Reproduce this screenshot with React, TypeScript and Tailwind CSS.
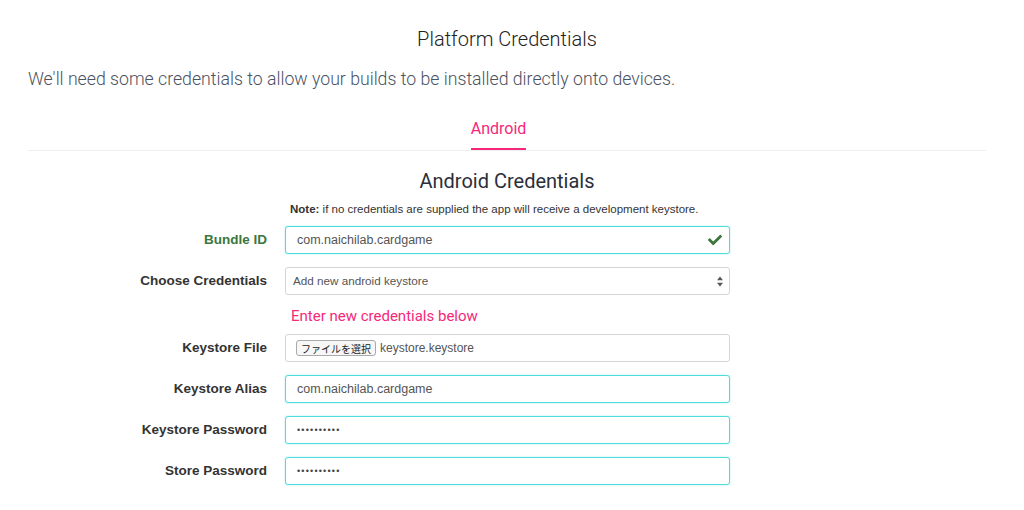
import { FaCheck } from "react-icons/fa";

const labelCls =
  "w-[285px] shrink-0 pr-[18px] text-right text-[13.5px] font-bold text-[#333] [font-family:'Liberation_Sans',Arial,sans-serif]";
const boxCls =
  "flex h-[28px] w-[445px] items-center rounded-[3px] border bg-white text-[12.5px] text-[#555] [font-family:'Liberation_Sans',Arial,sans-serif]";

function Row({ label, children, green }: { label: string; children: React.ReactNode; green?: boolean }) {
  return (
    <div className="flex items-center">
      <div className={labelCls + (green ? " !text-[#3c763d]" : "")}>{label}</div>
      {children}
    </div>
  );
}

function Dots() {
  return (
    <span className="pl-[11px] text-[9px] tracking-[1.2px] text-[#444]">••••••••••</span>
  );
}

export default function App() {
  return (
    <div className="min-h-[510px] w-full bg-white [font-family:Roboto,'Liberation_Sans',sans-serif]">
      <div className="ml-[28px] w-[958px] pt-[26px]">
        <h1 className="text-center text-[20px] font-light leading-[26px] text-[#222]">Platform Credentials</h1>
        <p className="mt-[14px] text-[17.7px] font-light leading-[26px] text-[#4b5262]">
          We'll need some credentials to allow your builds to be installed directly onto devices.
        </p>

        {/* tabs */}
        <div className="mt-[26px] flex justify-center border-b border-[#eeeeee]">
          <div className="mr-[17px] border-b-2 border-[#f5287a] pb-[8px] text-[16px] leading-[22px] text-[#f5287a]">Android</div>
        </div>

        <h2 className="mt-[17px] text-center text-[20px] font-normal leading-[26px] text-[#2b2f3a]">Android Credentials</h2>
        <p className="mt-[7px] pl-[262px] text-[11.5px] text-[#333] [font-family:'Liberation_Sans',Arial,sans-serif]">
          <b>Note:</b> if no credentials are supplied the app will receive a development keystore.
        </p>
      </div>

      <div className="mt-[8px] flex flex-col">
        <Row label="Bundle ID" green>
          <div className={boxCls + " justify-between border-[#4fdcdc] pl-[11px] pr-[7px] shadow-[0_0_2px_rgba(79,220,220,0.5)]"}>
            <span>com.naichilab.cardgame</span>
            <FaCheck className="h-[14px] w-[14px] text-[#3c763d]" />
          </div>
        </Row>

        <div className="mt-[13px]">
          <Row label="Choose Credentials">
            <div className={boxCls + " justify-between border-[#d5d5d5] pl-[7px] pr-[6px] !text-[11.7px]"}>
              <span>Add new android keystore</span>
              <svg width="6" height="11" viewBox="0 0 6 11" className="text-[#555]">
                <path d="M0 4.2 L3 0.5 L6 4.2 Z M0 6.8 L3 10.5 L6 6.8 Z" fill="currentColor" />
              </svg>
            </div>
          </Row>
        </div>

        <div className="ml-[291px] mt-[11px] text-[15px] leading-[20px] text-[#f5287a]">Enter new credentials below</div>

        <div className="mt-[8px]">
          <Row label="Keystore File">
            <div className={boxCls + " border-[#d5d5d5] pl-[10px]"}>
              <span className="flex h-[16px] items-center rounded-[3px] border border-[#aaa] bg-[#f7f7f7] px-[4px] text-[10px] text-[#222] [font-family:'Noto_Sans_CJK_JP',sans-serif]">
                ファイルを選択
              </span>
              <span className="ml-[4px] text-[12px]">keystore.keystore</span>
            </div>
          </Row>
        </div>

        <div className="mt-[13px]">
          <Row label="Keystore Alias">
            <div className={boxCls + " border-[#4fdcdc] pl-[11px] shadow-[0_0_2px_rgba(79,220,220,0.5)]"}>
              <span>com.naichilab.cardgame</span>
            </div>
          </Row>
        </div>

        <div className="mt-[13px]">
          <Row label="Keystore Password">
            <div className={boxCls + " border-[#4fdcdc] shadow-[0_0_2px_rgba(79,220,220,0.5)]"}>
              <Dots />
            </div>
          </Row>
        </div>

        <div className="mt-[13px]">
          <Row label="Store Password">
            <div className={boxCls + " border-[#4fdcdc] shadow-[0_0_2px_rgba(79,220,220,0.5)]"}>
              <Dots />
            </div>
          </Row>
        </div>
      </div>
    </div>
  );
}
